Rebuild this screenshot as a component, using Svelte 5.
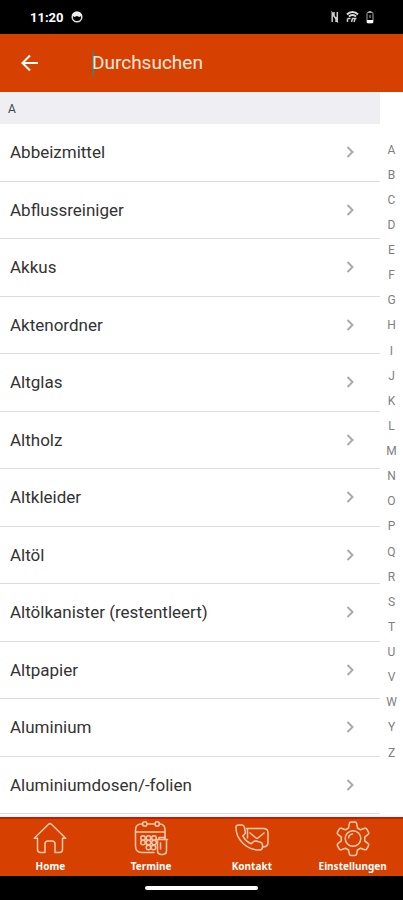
<script lang="ts">
	interface Tab {
		id: string;
		label: string;
	}

	const items = [
		'Abbeizmittel',
		'Abflussreiniger',
		'Akkus',
		'Aktenordner',
		'Altglas',
		'Altholz',
		'Altkleider',
		'Altöl',
		'Altölkanister (restentleert)',
		'Altpapier',
		'Aluminium',
		'Aluminiumdosen/-folien'
	];
	const letters = 'ABCDEFGHIJKLMNOPQRSTUVWYZ'.split('');
	const tabs: Tab[] = [
		{ id: 'home', label: 'Home' },
		{ id: 'dates', label: 'Termine' },
		{ id: 'contact', label: 'Kontakt' },
		{ id: 'settings', label: 'Einstellungen' }
	];

	let query = $state('');
	let visible = $derived(items.filter((i) => i.toLowerCase().includes(query.toLowerCase())));
</script>

<div class="app">
	<div class="status">
		<span class="clock">11:20</span>
		<svg viewBox="0 0 12 12" width="12" height="12" aria-hidden="true">
			<circle cx="6" cy="6" r="4.8" fill="none" stroke="#ddd" stroke-width="1.5" />
			<path d="M1 4.5C1.500 2 4 .5 6 .5s4.500 1.500 5 4L8.500 6 6 5 3.500 6z" fill="#eee" />
		</svg>
		<span class="spacer"></span>
		<svg viewBox="0 0 8 12" width="8" height="12" aria-hidden="true">
			<path d="M1.200 11V2L6.300 10V1M3 1v5M5 6v5" fill="none" stroke="#ccc" stroke-width="1.5" />
		</svg>
		<svg viewBox="0 0 13 12" width="13" height="12" aria-hidden="true">
			<path d="M1 3.500C4 .3 9 .3 12 3.500M3 5.500c2-2 5-2 7 0" fill="none" stroke="#ddd" stroke-width="2" />
			<path d="M1.500 11V7.500M1.500 7.500h3M5.500 11l1-3.500h4M8 11l1-3" fill="none" stroke="#ccc" stroke-width="1.5" />
		</svg>
		<svg viewBox="0 0 8 14" width="8" height="14" aria-hidden="true">
			<path d="M2.500 2.500V1h3v1.500" fill="#aaa" />
			<rect x="1" y="2.5" width="6" height="10.5" rx="1" fill="none" stroke="#aaa" />
			<rect x="1" y="10" width="6" height="3" fill="#fff" />
			<path d="M4 5v3" stroke="#bbb" />
		</svg>
	</div>

	<header class="bar">
		<button class="back" aria-label="Zurück">
			<svg viewBox="0 0 18 18" width="18" height="18">
				<path d="M17 9H1.500M9 1.500L1.500 9 9 16.500" fill="none" stroke="currentColor" stroke-width="2" />
			</svg>
		</button>
		<label class="search">
			<span class="caret"></span>
			<input type="text" placeholder="Durchsuchen" aria-label="Durchsuchen" bind:value={query} />
		</label>
	</header>

	<main class="content">
		<section class="list">
			<h2 id="group-a">A</h2>
			<ul aria-labelledby="group-a">
				{#each visible as item (item)}
					<li>
						<button class="row">
							<span>{item}</span>
							<svg viewBox="0 0 8 12" width="8" height="12" aria-hidden="true">
								<path d="M1.500 1L6.500 6l-5 5" fill="none" stroke="currentColor" stroke-width="2" />
							</svg>
						</button>
					</li>
				{/each}
			</ul>
		</section>
		<nav class="index" aria-label="Alphabet">
			{#each letters as letter (letter)}
				<button>{letter}</button>
			{/each}
		</nav>
	</main>

	<nav class="tabs">
		{#each tabs as tab (tab.id)}
			<button class="tab">
				<svg viewBox="0 0 34 34" width="34" height="34" aria-hidden="true">
					{#if tab.id === 'home'}
						<path d="M4.500 17.200H1.300L15.600 3.200q1.400-1.200 2.800 0L32.700 17.200H29.500V28.500q0 3-3 3H22V23q0-3-3-3h-4q-3 0-3 3v8.500H7.500q-3 0-3-3z" />
					{:else if tab.id === 'dates'}
						<path d="M20 31.500H8q-6.500 0-6.500-6.500V9q0-6 6-6h1M13 3h8M25.500 3q5.500 0 5.500 6v7.500M1.500 11h29.500" />
						<circle cx="10.8" cy="3" r="2.2" />
						<circle cx="23.2" cy="3" r="2.2" />
						<circle cx="9" cy="17" r="2.3" />
						<circle cx="14.500" cy="17" r="2.3" />
						<circle cx="20" cy="17" r="2.3" />
						<circle cx="9" cy="21.500" r="2.3" />
						<circle cx="14.500" cy="21.500" r="2.3" />
						<circle cx="20" cy="21.500" r="2.3" />
						<circle cx="14.500" cy="26.500" r="2.3" />
						<circle cx="19.500" cy="26.500" r="2.3" />
						<path d="M22.500 18.500h11M25 18.500v-2h6v2M23.500 19v10.500q0 4 4 4h1q4 0 4-4V19M26.500 22v6" />
					{:else if tab.id === 'contact'}
						<path d="M1 6.500q0-2.500 2.500-2.500H7q1.800 0 2.300 2l1 4.800q.3 1.500-1 2.700l-1.500 1.300c2 4 4.700 6.500 8.500 8l2-2q1.200-1.200 2.700-.8l4.500 1.300q2 .6 2 2.500v2.200q0 3-3 3C11.500 29 1 18.500 1 6.500z" />
						<path d="M11.500 7.500H28.500q4.500 0 4.500 4.500v9.500q0 4-4.500 4.500M12.500 8v9M15 12l6 5q1 .7 2 0l6-5" />
					{:else}
						<path d="M12.500 7L13.400 2.500Q13.700 1 15.200 1h3.600q1.500 0 1.800 1.500L21.500 7l3 1.800 4.200-1.500q1.400-.5 2.100.8l1.700 3q.7 1.300-.4 2.300L28.700 16.200v3.600l3.400 2.800q1.100 1 .4 2.300l-1.700 3q-.7 1.300-2.100.8l-4.200-1.500-3 1.800-.9 4q-.3 1.500-1.800 1.500h-3.600q-1.500 0-1.800-1.500l-.9-4-3-1.800-4.200 1.500q-1.400.5-2.100-.8l-1.700-3q-.7-1.300.4-2.300l3.400-2.800v-3.600L1.900 13.400q-1.100-1-.4-2.300l1.700-3q.7-1.300 2.100-.8l4.200 1.500z" />
						<circle cx="17" cy="17.5" r="7.8" />
						<path d="M12.500 17q.5-3.500 4-4" />
					{/if}
				</svg>
				<span>{tab.label}</span>
			</button>
		{/each}
	</nav>
	<div class="gesture"><span></span></div>
</div>

<style>
	:global(body) { margin: 0; }
	.app {
		min-height: 100vh;
		display: flex;
		flex-direction: column;
		background: #fff;
		color: #333;
		font-family: Roboto, sans-serif;
	}
	button {
		padding: 0;
		border: none;
		background: none;
		color: inherit;
		font: inherit;
		cursor: pointer;
	}

	.status {
		height: 34px;
		box-sizing: border-box;
		padding: 0 29px 0 30px;
		display: flex;
		align-items: center;
		gap: 7px;
		background: #000;
		color: #fff;
	}
	.clock { font-size: 13px; font-weight: 700; }
	.spacer { flex: 1; }

	.bar {
		height: 58px;
		display: flex;
		align-items: center;
		gap: 53px;
		padding: 0 21px;
		background: #d64000;
		color: #fff;
	}
	.back { display: flex; }
	.search { flex: 1; display: flex; align-items: center; min-width: 0; }
	.caret { width: 2px; height: 25px; background: #67725a; }
	input {
		flex: 1;
		min-width: 0;
		padding: 0;
		margin-left: -2px;
		border: none;
		outline: none;
		background: none;
		color: #fff;
		font: 400 19px/28px Roboto, sans-serif;
	}
	input::placeholder { color: #ffe9df; opacity: 1; }

	.content { flex: 1; display: flex; }
	.list { flex: 1; display: flex; flex-direction: column; padding-bottom: 3px; }
	h2 {
		margin: 0;
		padding: 2px 8px 0;
		background: #efeef3;
		color: #444;
		font-size: 12px;
		font-weight: 400;
		line-height: 30px;
	}
	ul {
		flex: 1;
		margin: 0;
		padding: 0;
		list-style: none;
		display: flex;
		flex-direction: column;
	}
	li { flex: 1; display: flex; border-bottom: 1px solid #ddd; }
	.row {
		flex: 1;
		display: flex;
		align-items: center;
		justify-content: space-between;
		padding: 0 26px 0 10px;
		font-size: 17px;
		text-align: left;
	}
	.row svg { color: #aaa; }

	.index {
		width: 23px;
		box-sizing: border-box;
		padding: 45px 0 52px;
		display: flex;
		flex-direction: column;
		color: #808080;
		font-size: 12px;
	}
	.index button { flex: 1; line-height: 16px; }

	.tabs {
		height: 59px;
		box-sizing: border-box;
		padding-top: 2px;
		display: flex;
		border-top: 2px solid #c81c00;
		background: #d64000;
		color: #fff;
	}
	.tab {
		flex: 1 1 0;
		min-width: 0;
		display: flex;
		flex-direction: column;
		align-items: center;
		gap: 3px;
	}
	.tab svg {
		overflow: visible;
		fill: none;
		stroke: #ffc9ad;
		stroke-width: 1.5;
		stroke-linejoin: round;
		stroke-linecap: round;
	}
	.tab span {
		font-family: 'Noto Sans', sans-serif;
		font-size: 10px;
		font-weight: 700;
		line-height: 16px;
	}

	.gesture {
		height: 24px;
		display: flex;
		align-items: center;
		justify-content: center;
		background: #000;
	}
	.gesture span { width: 28%; height: 4px; border-radius: 2px; background: #fff; }
</style>
